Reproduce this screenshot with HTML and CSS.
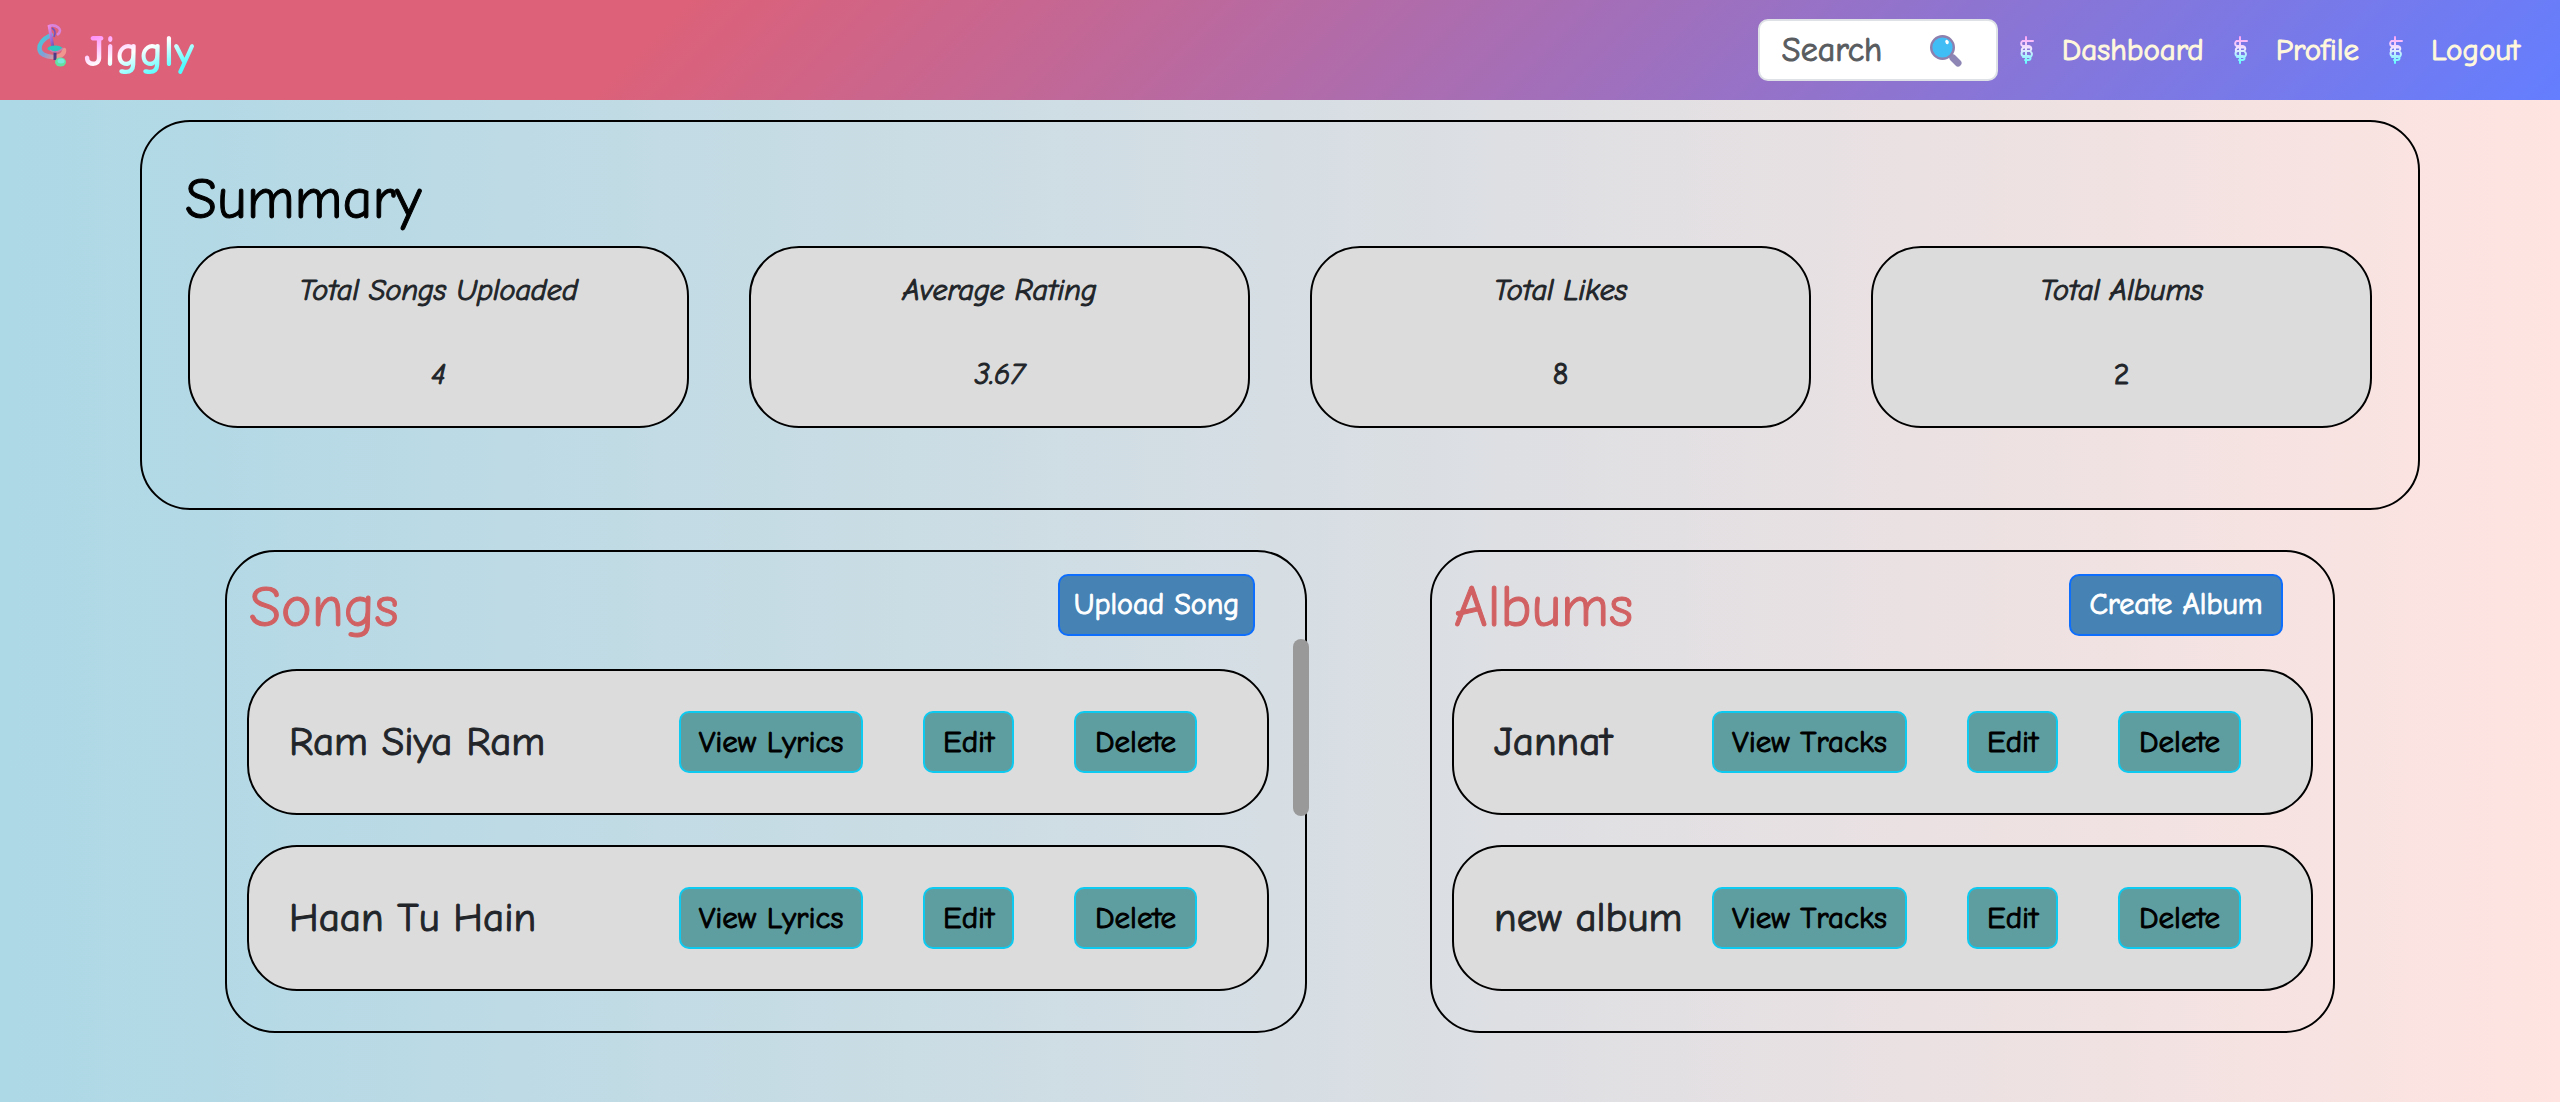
FILE: index.html
```html
<!DOCTYPE html>
<html lang="en">
<head>
  <meta charset="utf-8">
  <meta name="viewport" content="width=device-width, initial-scale=1">
  <title>Jiggly</title>
  <link rel="stylesheet" href="styles.css">
</head>
<body>
  <svg class="defs" width="0" height="0" aria-hidden="true">
    <defs>
      <linearGradient id="candy" gradientUnits="userSpaceOnUse" x1="0" y1="0" x2="0" y2="28">
        <stop offset="0" stop-color="#ff9ff6"/>
        <stop offset="0.45" stop-color="#f0e8ff"/>
        <stop offset="1" stop-color="#5cfdff"/>
      </linearGradient>
      <symbol id="staff" viewBox="0 0 16 28">
        <path d="M8 1V27M15 5H4.500a3 3 0 0 0 0 5H11a2.700 2.700 0 0 1 1 5H6a2.500 2.500 0 0 0 0 5H10.500a2 2 0 0 1 0 4H7M13 11.500H6a2.500 2.500 0 0 0-2 3.500M13 16a3 3 0 0 1-1 5H5" fill="none" stroke="url(#candy)" stroke-width="2" stroke-linecap="round"/>
      </symbol>
    </defs>
  </svg>

  <header class="navbar">
    <a class="brand" href="#">
      <svg class="brand-logo" viewBox="0 0 30 44" aria-hidden="true">
        <defs>
          <linearGradient id="note" x1="0" y1="0" x2="0.300" y2="1">
            <stop offset="0" stop-color="#f08be6"/>
            <stop offset="0.500" stop-color="#9b6ad8"/>
            <stop offset="1" stop-color="#4c3a86"/>
          </linearGradient>
          <linearGradient id="curl" x1="0" y1="0" x2="1" y2="0.600">
            <stop offset="0" stop-color="#35d6d8"/>
            <stop offset="0.500" stop-color="#7fa0d8"/>
            <stop offset="1" stop-color="#f0968f"/>
          </linearGradient>
        </defs>
        <path d="M14 11C8 14 2 18 2.500 25C3 35 28 36 27 26" fill="none" stroke="url(#curl)" stroke-width="4.500" stroke-linecap="round"/>
        <path d="M20 11C28 5 18 0 12 2" fill="none" stroke="#d884dc" stroke-width="2.600"/>
        <path d="M12 1L16 24M18 26V36" fill="none" stroke="url(#note)" stroke-width="3"/>
        <path d="M15 4Q20 7 17 13" fill="none" stroke="#6654c4" stroke-width="1.500"/>
        <ellipse cx="18" cy="24.500" rx="7.500" ry="3" fill="#2cc8bd"/>
        <path d="M13 26Q19 31 26 24" fill="none" stroke="#c77fb4" stroke-width="1.500"/>
        <ellipse cx="23.500" cy="38" rx="5.500" ry="4.500" fill="#63e0a2"/>
        <ellipse cx="24" cy="37" rx="3.500" ry="2.500" fill="#76e8dc"/>
      </svg>
      <span class="brand-name">Jiggly</span>
    </a>
    <form class="search" role="search">
      <input class="search-input" type="search" placeholder="Search" aria-label="Search">
      <svg class="search-icon" viewBox="0 0 32 32" aria-hidden="true">
        <path d="M20 20l7 7" stroke="#8e86b5" stroke-width="5"/>
        <path d="M23 23l5 5" stroke="#8e86b5" stroke-width="7" stroke-linecap="round"/>
        <circle cx="12.500" cy="12.500" r="11.300" fill="#41bdf5" stroke="#8e80ae" stroke-width="2.400"/>
        <ellipse cx="17" cy="7" rx="1.600" ry="2.300" fill="#fff" transform="rotate(-25 17 7)"/>
      </svg>
    </form>
    <nav class="nav">
      <a class="nav-link" href="#"><svg class="nav-icon" aria-hidden="true"><use href="#staff"/></svg>Dashboard</a>
      <a class="nav-link" href="#"><svg class="nav-icon" aria-hidden="true"><use href="#staff"/></svg>Profile</a>
      <a class="nav-link" href="#"><svg class="nav-icon" aria-hidden="true"><use href="#staff"/></svg>Logout</a>
    </nav>
  </header>

  <main class="page">
    <section class="panel summary">
      <h1 class="title">Summary</h1>
      <div class="stats">
        <div class="card stat"><p><em>Total Songs Uploaded</em></p><p><em>4</em></p></div>
        <div class="card stat"><p><em>Average Rating</em></p><p><em>3.67</em></p></div>
        <div class="card stat"><p><em>Total Likes</em></p><p>8</p></div>
        <div class="card stat"><p><em>Total Albums</em></p><p>2</p></div>
      </div>
    </section>

    <div class="library">
      <section class="panel list songs">
        <div class="list-head">
          <h2 class="title">Songs</h2>
          <button class="btn btn-primary" type="button">Upload Song</button>
        </div>
        <div class="card item">
          <span class="item-name">Ram Siya Ram</span>
          <button class="btn btn-view" type="button">View Lyrics</button>
          <button class="btn btn-edit" type="button">Edit</button>
          <button class="btn btn-delete" type="button">Delete</button>
        </div>
        <div class="card item">
          <span class="item-name">Haan Tu Hain</span>
          <button class="btn btn-view" type="button">View Lyrics</button>
          <button class="btn btn-edit" type="button">Edit</button>
          <button class="btn btn-delete" type="button">Delete</button>
        </div>
        <div class="scroll-thumb"></div>
      </section>

      <section class="panel list albums">
        <div class="list-head">
          <h2 class="title">Albums</h2>
          <button class="btn btn-primary" type="button">Create Album</button>
        </div>
        <div class="card item">
          <span class="item-name">Jannat</span>
          <button class="btn btn-view" type="button">View Tracks</button>
          <button class="btn btn-edit" type="button">Edit</button>
          <button class="btn btn-delete" type="button">Delete</button>
        </div>
        <div class="card item">
          <span class="item-name">new album</span>
          <button class="btn btn-view" type="button">View Tracks</button>
          <button class="btn btn-edit" type="button">Edit</button>
          <button class="btn btn-delete" type="button">Delete</button>
        </div>
      </section>
    </div>
  </main>
</body>
</html>
```
FILE: styles.css
```css
* {
  box-sizing: border-box;
}

body {
  margin: 0;
  min-height: 100vh;
  background: linear-gradient(90deg, #add8e6, #ffe4e1);
  color: #212529;
  font-family: "Comic Sans MS", "Comic Neue", "Open Sans", sans-serif;
  font-size: 30px;
  line-height: 42px;
  -webkit-text-stroke: 1px currentColor;
}

h1, h2, p {
  margin: 0;
  font-weight: 400;
}

.defs {
  position: absolute;
}

/* Navbar */

.navbar {
  display: flex;
  align-items: center;
  height: 100px;
  padding: 0 40px 0 36px;
  background: linear-gradient(135deg, #dc6179 26%, #647eff);
}

.brand {
  display: flex;
  align-items: center;
  gap: 16px;
  margin-right: auto;
  text-decoration: none;
}

.brand-logo {
  width: 32px;
  height: 44px;
  margin-bottom: 8px;
}

.brand-name {
  padding-top: 4px;
  background: linear-gradient(160deg, #ff8df8 20%, #fff 50%, #4ffcff 80%);
  background-clip: text;
  color: transparent;
  font-size: 44px;
  font-weight: 700;
  line-height: 60px;
  -webkit-text-stroke: 0;
}

.search {
  display: flex;
  position: relative;
}

.search-input {
  width: 240px;
  height: 62px;
  padding: 0 22px;
  border: 2px solid #dee2e6;
  border-radius: 10px;
  background: #fff;
  color: #212529;
  font: inherit;
  font-size: 34px;
}

.search-input::placeholder {
  color: #595c5f;
  opacity: 1;
}

.search-icon {
  position: absolute;
  top: 16px;
  right: 36px;
  width: 32px;
  height: 32px;
}

.nav {
  display: flex;
  gap: 28px;
  margin-left: 20px;
  font-size: 31px;
}

.nav-link {
  display: flex;
  align-items: center;
  gap: 28px;
  color: #fff8dc;
  text-decoration: none;
}

.nav-icon {
  width: 16px;
  height: 28px;
}

/* Panels and cards */

.page {
  padding: 20px 0 68px;
}

.panel {
  border: 2px solid #000;
  border-radius: 50px;
}

.card {
  border: 2px solid #000;
  border-radius: 50px;
  background: #dcdcdc;
}

.title {
  font-size: 58px;
  line-height: 68px;
}

.summary {
  margin: 0 140px;
  padding: 44px 46px 80px;
  color: #000;
}

.summary .title {
  margin-left: -3px;
}

.stats {
  display: grid;
  grid-template-columns: repeat(4, 1fr);
  gap: 60px;
  margin-top: 12px;
}

.stat {
  display: grid;
  gap: 42px;
  padding: 22px 24px 30px;
  color: #212529;
  text-align: center;
}

/* Songs and albums */

.library {
  display: grid;
  grid-template-columns: 1082fr 905fr;
  gap: 123px;
  margin: 40px 225px 0;
}

.list {
  position: relative;
  display: grid;
  gap: 30px;
  padding: 22px 20px 40px;
}

.songs {
  padding-right: 36px;
}

.list-head {
  display: flex;
  align-items: flex-start;
  justify-content: space-between;
  height: 65px;
  padding: 0 14px 0 2px;
}

.albums .list-head {
  padding-right: 30px;
}

.list-head .title {
  color: #d16062;
}

.item {
  display: flex;
  align-items: center;
  gap: 60px;
  height: 146px;
  padding: 0 70px 0 40px;
}

.item-name {
  flex: 1;
  margin-right: -60px;
  font-size: 41px;
  line-height: 60px;
  white-space: nowrap;
}

.btn {
  height: 62px;
  padding: 0;
  border: 2px solid #0dcaf0;
  border-radius: 10px;
  background: #5f9ea0;
  color: #000;
  font: inherit;
  font-size: 31px;
}

.btn-primary {
  width: 197px;
  border-color: #0d6efd;
  background: #4682b4;
  color: #fff;
  font-size: 30px;
}

.albums .btn-primary {
  width: 214px;
}

.btn-view {
  width: 184px;
}

.albums .btn-view {
  width: 195px;
}

.btn-edit {
  width: 91px;
}

.btn-delete {
  width: 123px;
}

.scroll-thumb {
  position: absolute;
  top: 87px;
  right: -4px;
  width: 16px;
  height: 177px;
  border-radius: 8px;
  background: #999;
}
```
